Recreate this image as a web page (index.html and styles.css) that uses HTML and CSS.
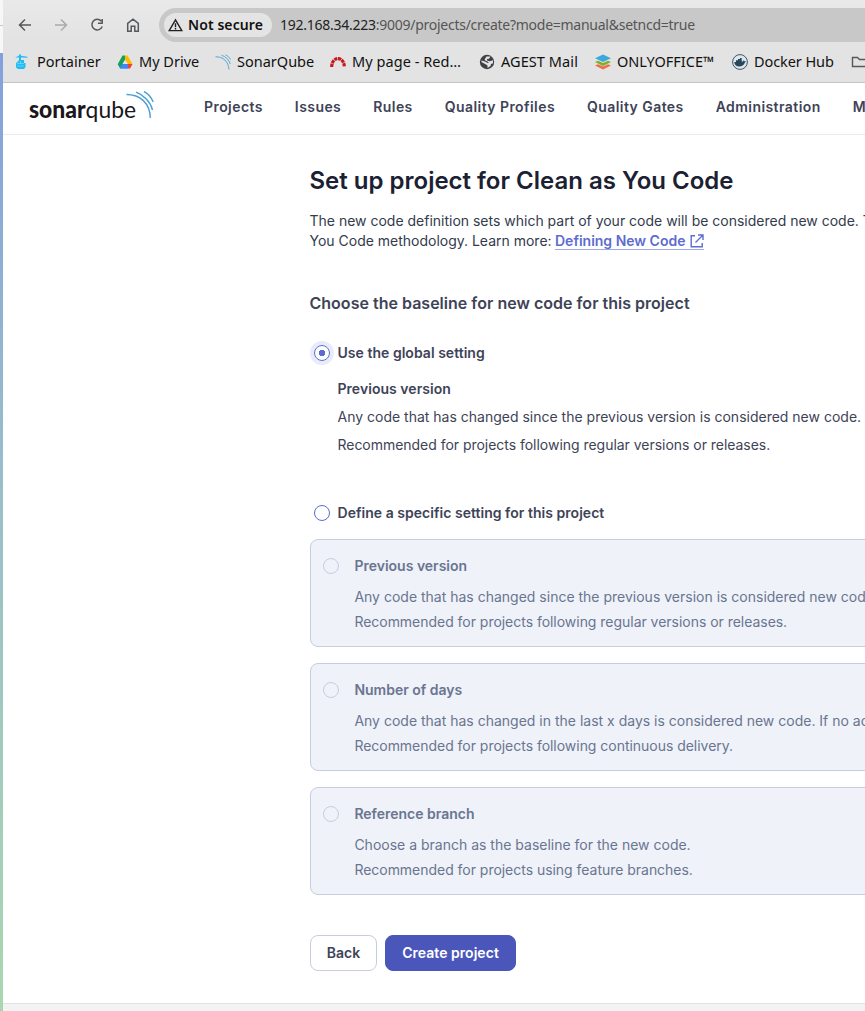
FILE: index.html
```html
<!DOCTYPE html>
<html lang="en">
<head>
<meta charset="utf-8">
<title>Set up project for Clean as You Code</title>
<link rel="stylesheet" href="styles.css">
</head>
<body>
<div class="desktop">
<div class="edge"></div>
<div class="window">
<header class="browser">
  <div class="toolbar">
    <svg class="tool" viewBox="0 0 16 16"><path d="M14 8H3M8 2.500L2.500 8 8 13.500"/></svg>
    <svg class="tool tool-off" viewBox="0 0 16 16"><path d="M2 8h11M8 2.500L13.500 8 8 13.500"/></svg>
    <svg class="tool" viewBox="0 0 16 16"><path d="M12.300 4.200A5.300 5.300 0 1 0 13.200 9.500M13.200 2v4.300H8.900"/></svg>
    <svg class="tool" viewBox="0 0 16 16"><path d="M2.700 6.300L8 2.200l5.300 4.100v7.900H9.800V9.300H6.200v4.900H2.700z"/></svg>
    <div class="address">
      <div class="chip"><svg class="warn" viewBox="0 0 16 14"><path d="M8 1.500L14.700 13H1.300zM8 5v4M8 10v1.800"/></svg><span class="chip-text">Not secure</span></div>
      <span class="url"><span class="host">192.168.34.223</span>:9009/projects/create?mode=manual&amp;setncd=true</span>
    </div>
  </div>
  <div class="bookmarks">
    <div class="bookmark bm-portainer"><svg viewBox="0 0 16 16"><path fill="#20bdf4" d="M1.500 3.200L5 1.800V.5h2v1.300l6.500 1v1L7 3.500V6h3v3h1.500v4l-1.500 2H4l-2-1.500V9l1.500-1L5 6V3.500H1.500z"/><path stroke="#a5e3fa" stroke-width=".5" d="M3 9.500h7M6.500 7v3M3 12h7"/></svg><span>Portainer</span></div>
    <div class="bookmark bm-drive"><svg viewBox="0 0 16 16"><path fill="#13a15f" d="M5.500 1.500H8L8 5.800 3.300 14 .8 10z"/><path fill="#ffba00" d="M8 1.500h2.500L15.500 10H11L8 5.500z"/><path fill="#4285f4" d="M4.500 10H11v4.500H3.200L.8 10z"/><path fill="#13a15f" d="M.8 10h4.500L3 14z"/><path fill="#4285f4" d="M5.500 10.300H11v4.200H3.100z"/><path fill="#ea4335" d="M11 10h4.500l-2.400 4.500H11z"/><path fill="#e4e4e4" d="M8 6.200L10.300 10H5.700z"/></svg><span>My Drive</span></div>
    <div class="bookmark bm-sonar"><svg viewBox="0 0 16 16"><g fill="none" stroke="#57a6d8" stroke-width="1"><path d="M.5 2.800C8 2.500 13.500 7.500 14 15.500M6.500 1.300c4 1 7.500 4.500 8.800 8.700M10.500.8c2 .9 4 2.700 5 4.700"/></g></svg><span>SonarQube</span></div>
    <div class="bookmark bm-redmine"><svg viewBox="0 0 16 16"><path fill="none" stroke="#c8191e" stroke-width="3.200" stroke-dasharray="3.300 .6" d="M1.700 13C1.700 1.700 14.300 1.700 14.300 13"/></svg><span>My page - Red…</span></div>
    <div class="bookmark bm-agest"><svg viewBox="0 0 16 16"><circle cx="8" cy="8" r="7.200" fill="#3f4145"/><path fill="#e4e4e4" d="M7.500 2.500h4L10 4.700 8 5v1.500l3 .8 3-1v3l-2 .7-.5 2-3 2v-2.500L7 10.500 2.500 8V6.500l4 1.300 1.500 1 2 .2-1.500-1.500L5.500 6l1-2z"/></svg><span>AGEST Mail</span></div>
    <div class="bookmark bm-office"><svg viewBox="0 0 16 16"><path fill="#ef6d4d" d="M0 11.500l3-1.300 5 2.200 5-2.200 3 1.300-8 4z"/><path fill="#83af27" d="M0 8l3-1.200L8 9l5-2.200L16 8l-8 4z"/><path fill="#3aa8dd" d="M0 4.200L8 .5l8 3.700L8 8z"/></svg><span>ONLYOFFICE™</span></div>
    <div class="bookmark bm-docker"><svg viewBox="0 0 16 16"><circle cx="8" cy="8" r="7.400" fill="#dfe7ec" stroke="#3b5669" stroke-width="1"/><path fill="#28475c" d="M2.300 8H4V6.300h2V5h2V4h1.700v3.500h1.500l.3-1.500 1 1.200 1.500.3-1.200 1.300c-1 2.500-3 3.700-5.500 3.700C4.500 12.500 2.500 11 2.300 8z"/></svg><span>Docker Hub</span></div>
    <svg class="folder" viewBox="0 0 18 16"><path d="M1.500 12.500v-9h5l2 2h8v7z"/></svg>
  </div>
</header>
<nav class="nav">
  <div class="logo"><svg width="127" height="32" viewBox="0 0 127 32"><text class="logo-text" x="1" y="26.500" textLength="107" lengthAdjust="spacingAndGlyphs"><tspan class="logo-bold">sonar</tspan><tspan>qube</tspan></text><g fill="none" stroke="#4b9fd3" stroke-width="1.400"><path d="M98.500 3.500C112 3.500 122 12 122.300 27"/><path d="M108 1.200C115.500 3.800 122.500 10.800 124.500 19"/><path d="M116 .500C120 2.500 123.500 6.500 125.200 11"/></g></svg></div>
  <a>Projects</a><a>Issues</a><a>Rules</a><a>Quality Profiles</a><a>Quality Gates</a><a>Administration</a><a>More</a>
</nav>
<main class="content">
  <h1>Set up project for Clean as You Code</h1>
  <p class="intro">The new code definition sets which part of your code will be considered new code. This<br>You Code methodology. Learn more: <a class="link">Defining New Code <svg viewBox="0 0 14 14"><path d="M5 1.700H1.200v11h11V9M8 1h5v5M13 1L5.500 8.500"/></svg></a></p>
  <h2>Choose the baseline for new code for this project</h2>
  <div class="option"><span class="radio radio-on"></span><b>Use the global setting</b></div>
  <div class="detail"><b>Previous version</b><p>Any code that has changed since the previous version is considered new code.</p><p>Recommended for projects following regular versions or releases.</p></div>
  <div class="option"><span class="radio"></span><b>Define a specific setting for this project</b></div>
  <div class="cards">
    <section class="card"><span class="radio radio-off"></span><div><b>Previous version</b><p>Any code that has changed since the previous version is considered new code.</p><p>Recommended for projects following regular versions or releases.</p></div></section>
    <section class="card"><span class="radio radio-off"></span><div><b>Number of days</b><p>Any code that has changed in the last x days is considered new code. If no action</p><p>Recommended for projects following continuous delivery.</p></div></section>
    <section class="card"><span class="radio radio-off"></span><div><b>Reference branch</b><p>Choose a branch as the baseline for the new code.</p><p>Recommended for projects using feature branches.</p></div></section>
  </div>
  <div class="actions"><button class="btn">Back</button><button class="btn btn-primary">Create project</button></div>
</main>
<footer class="footer"></footer>
</div>
</div>
</body>
</html>
```
FILE: styles.css
```css
* { box-sizing: border-box; }
body { margin: 0; overflow: hidden; font-family: Inter, sans-serif; font-size: 14px; line-height: 20px; color: #3e4357; background: #fff; }
p, h1, h2 { margin: 0; white-space: nowrap; }
b { font-weight: 600; }
svg { flex: none; }
.desktop { display: flex; width: 865px; height: 1011px; overflow: hidden; }
.edge { flex: none; width: 3px; background: linear-gradient(#c9c9c9, #c9c9c9) 0 25px / 3px 1px no-repeat, linear-gradient(#f7f7f7, #f7f7f7) 0 0 / 3px 53px no-repeat, linear-gradient(#859fdd 53px, #9bbdca 480px, #abd5b1 1000px); }
.window { display: flex; flex-direction: column; flex: none; width: 862px; overflow: hidden; }

.browser { height: 83px; border-bottom: 1px solid #c4c4c4; background: linear-gradient(#e9e9e9, #e3e3e3 40px); font-family: "Noto Sans", sans-serif; color: #111; }
.toolbar { display: flex; align-items: center; height: 50px; padding-left: 14px; }
.tool { width: 16px; height: 16px; margin-right: 20px; fill: none; stroke: #55585c; stroke-width: 1.5; }
.tool-off { stroke: #aaa; }
.address { display: flex; align-items: center; width: 740px; height: 34px; margin: 0 0 0 -2px; padding-left: 5px; flex: none; border-radius: 17px; background: #c8c8c8; }
.chip { display: flex; align-items: center; flex: none; width: 108px; height: 24px; padding-left: 4px; border-radius: 12px; background: #e4e4e4; }
.warn { width: 15px; height: 14px; margin-right: 5px; fill: none; stroke: #222; stroke-width: 1.5; }
.chip-text { font-size: 14px; font-weight: 600; white-space: nowrap; letter-spacing: .08px; }
.url { margin-left: 8px; font-size: 14px; letter-spacing: -.26px; color: #555; white-space: nowrap; }
.host { color: #222; }
.bookmarks { display: flex; height: 24px; align-items: center; padding-left: 11px; font-size: 14.5px; }
.bookmark { display: flex; align-items: center; flex: none; gap: 6px; white-space: nowrap; }
.bookmark svg { width: 16px; height: 16px; }
.bookmark span { padding-bottom: 2px; }
.bm-portainer { width: 103px; }
.bm-portainer span { padding-left: 1px; }
.bm-drive { width: 98px; }
.bm-sonar { width: 115px; }
.bm-redmine { width: 149px; letter-spacing: .06px; }
.bm-agest { width: 116px; letter-spacing: .08px; }
.bm-office { width: 137px; }
.bm-docker { width: 119px; letter-spacing: -.08px; }
.folder { width: 18px; height: 16px; fill: none; stroke: #55585c; stroke-width: 1.4; }

.nav { display: flex; align-items: center; gap: 32px; height: 52px; padding: 0 0 4px 25px; border-bottom: 1px solid #ebebeb; font-weight: 600; letter-spacing: .43px; white-space: nowrap; }
.nav a { flex: none; }
.logo { flex: none; width: 144px; height: 32px; letter-spacing: 0; }
.logo-text { font-family: Lato, sans-serif; font-size: 24px; font-weight: 400; fill: #1b171b; }
.logo-bold { font-weight: 900; }

.content { height: 868px; padding: 30px 0 0 307px; }
h1 { margin-left: -.5px; font-size: 24px; line-height: 32px; font-weight: 600; color: #1b2032; }
.intro { margin: 14px 0 0 -.5px; color: #333b4d; letter-spacing: -.005px; }
.link { display: inline-block; height: 19px; margin-left: -.5px; border-bottom: 1px solid #9ca8ed; color: #5d6cd0; font-weight: 600; }
.link svg { width: 14px; height: 14px; margin-left: 1px; vertical-align: -2px; fill: none; stroke: currentColor; stroke-width: 1.4; }
h2 { margin: 40px 0 0 -.5px; font-size: 16px; line-height: 24px; font-weight: 600; letter-spacing: .015px; }
.option { display: flex; align-items: center; gap: 7.5px; height: 20px; margin-top: 28px; padding-left: 4px; }
.option b { letter-spacing: .03px; }
.radio { flex: none; width: 16px; height: 16px; border: 1px solid #5d6cd0; border-radius: 50%; background: #fff; }
.radio-on { background: radial-gradient(circle, #5d6cd0 3px, #fff 3.5px); box-shadow: 0 0 0 4px #e8ebfb; }
.radio-off { border-color: #c5cddf; background: #eff2f9; }
.detail { height: 96px; margin: 12px 0 32px; padding: 4px 0 0 27.5px; line-height: 20px; }
.detail b { letter-spacing: .04px; }
.detail p { margin-top: 8px; }
.detail p + p, .card p + p { letter-spacing: -.03px; }
.detail + .option { margin-top: 0; }
.cards { display: flex; flex-direction: column; gap: 16px; margin-top: 16px; }
.card { display: flex; gap: 15.4px; width: 700px; height: 108px; padding: 16px 12px; border: 1px solid #c5cddf; border-radius: 8px; background: #eff2f9; color: #6a7590; }
.card .radio { margin-top: 2px; }
.card b { display: block; margin-bottom: 8px; }
.card p { line-height: 25px; }
.actions { display: flex; gap: 8px; margin-top: 40px; }
.btn { width: 67px; height: 36px; padding: 0; border: 1px solid #c5cddf; border-radius: 8px; background: #fff; color: #3e4357; font: 600 14px/20px Inter, sans-serif; }
.btn-primary { width: 131px; border-color: #4b56bb; background: #4b56bb; color: #fff; letter-spacing: .04px; }
.footer { flex: 1; border-top: 1px solid #e1e1e1; background: #f3f3f3; }
```
